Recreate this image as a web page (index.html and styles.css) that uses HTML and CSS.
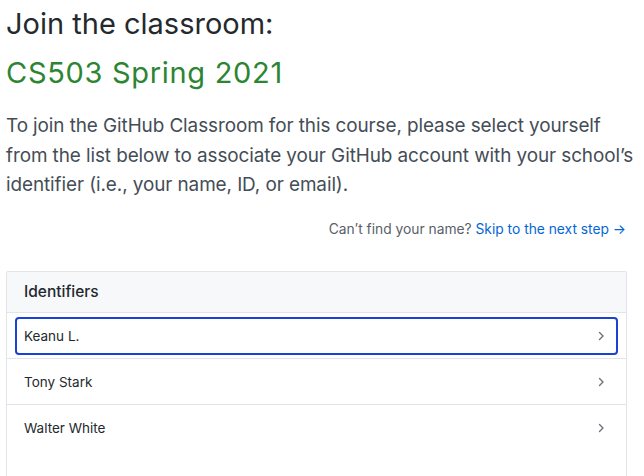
FILE: index.html
```html
<!DOCTYPE html>
<html lang="en">
<head>
<meta charset="utf-8">
<title>Join the classroom</title>
<link rel="stylesheet" href="styles.css">
</head>
<body>
<main class="page">
  <h1 class="title">Join the classroom:</h1>
  <h2 class="course">CS503 Spring 2021</h2>
  <p class="lead">To join the GitHub Classroom for this course, please select yourself from the list below to associate your GitHub account with your school’s identifier (i.e., your name, ID, or email).</p>
  <p class="skip">Can’t find your name? <a class="skip-link" href="#">Skip to the next step →</a></p>
  <section class="box">
    <div class="box-header">Identifiers</div>
    <ul class="list">
      <li class="row"><a class="row-link is-focused" href="#"><span>Keanu L.</span><svg class="chev" width="7" height="10" viewBox="0 0 7 10"><polyline points="1.5,1.5 5,5 1.5,8.5" fill="none" stroke="currentColor" stroke-width="1.4" stroke-linecap="round" stroke-linejoin="round"/></svg></a></li>
      <li class="row"><a class="row-link" href="#"><span>Tony Stark</span><svg class="chev" width="7" height="10" viewBox="0 0 7 10"><polyline points="1.5,1.5 5,5 1.5,8.5" fill="none" stroke="currentColor" stroke-width="1.4" stroke-linecap="round" stroke-linejoin="round"/></svg></a></li>
      <li class="row"><a class="row-link" href="#"><span>Walter White</span><svg class="chev" width="7" height="10" viewBox="0 0 7 10"><polyline points="1.5,1.5 5,5 1.5,8.5" fill="none" stroke="currentColor" stroke-width="1.4" stroke-linecap="round" stroke-linejoin="round"/></svg></a></li>
    </ul>
  </section>
</main>
</body>
</html>
```
FILE: styles.css
```css
* { box-sizing: border-box; }
html, body { margin: 0; padding: 0; background: #fff; }
body {
  font-family: Inter, "Noto Sans", "Liberation Sans", sans-serif;
  color: #24292e;
  height: 476px;
  overflow: hidden;
}
.page {
  width: 621px;
  margin-left: 6px;
}
.title {
  margin: 0;
  padding-top: 6px;
  font-size: 29px;
  font-weight: 400;
  line-height: 36px;
  color: #24292e;
}
.course {
  margin: 13px 0 0;
  font-size: 29px;
  font-weight: 400;
  line-height: 36px;
  letter-spacing: 0.7px;
  color: #2c8532;
}
.lead {
  width: 638px;
  margin: 20px 0 0;
  font-size: 18.9px;
  letter-spacing: -0.08px;
  line-height: 29.5px;
  color: #444d56;
}
.skip {
  margin: 19px 0 0;
  text-align: right;
  font-size: 13.8px;
  line-height: 20px;
  color: #586069;
  padding-right: 1px;
}
.skip-link { color: #0366d6; text-decoration: none; }
.box {
  margin-top: 32px;
  border: 1px solid #e1e4e8;
  border-bottom: 0;
  border-radius: 2px 2px 0 0;
  padding-bottom: 30px;
}
.box-header {
  height: 41px;
  padding: 0 17px;
  display: flex;
  align-items: center;
  background: #f6f8fa;
  border-bottom: 1px solid #e1e4e8;
  font-size: 15.5px;
  font-weight: 500;
}
.list { list-style: none; margin: 0; padding: 0; }
.row {
  height: 46px;
  padding: 4px 8px 3px;
  border-bottom: 1px solid #e1e4e8;
}
.row:last-child { border-bottom: 0; }
.row-link {
  height: 38px;
  display: flex;
  align-items: center;
  justify-content: space-between;
  padding: 0 11px 0 7px;
  border: 2px solid transparent;
  border-radius: 4px;
  color: #24292e;
  text-decoration: none;
  font-size: 13.5px;
}
.row-link.is-focused { border-color: #1a42d4; }
.chev { color: #6a737d; display: block; }
```
